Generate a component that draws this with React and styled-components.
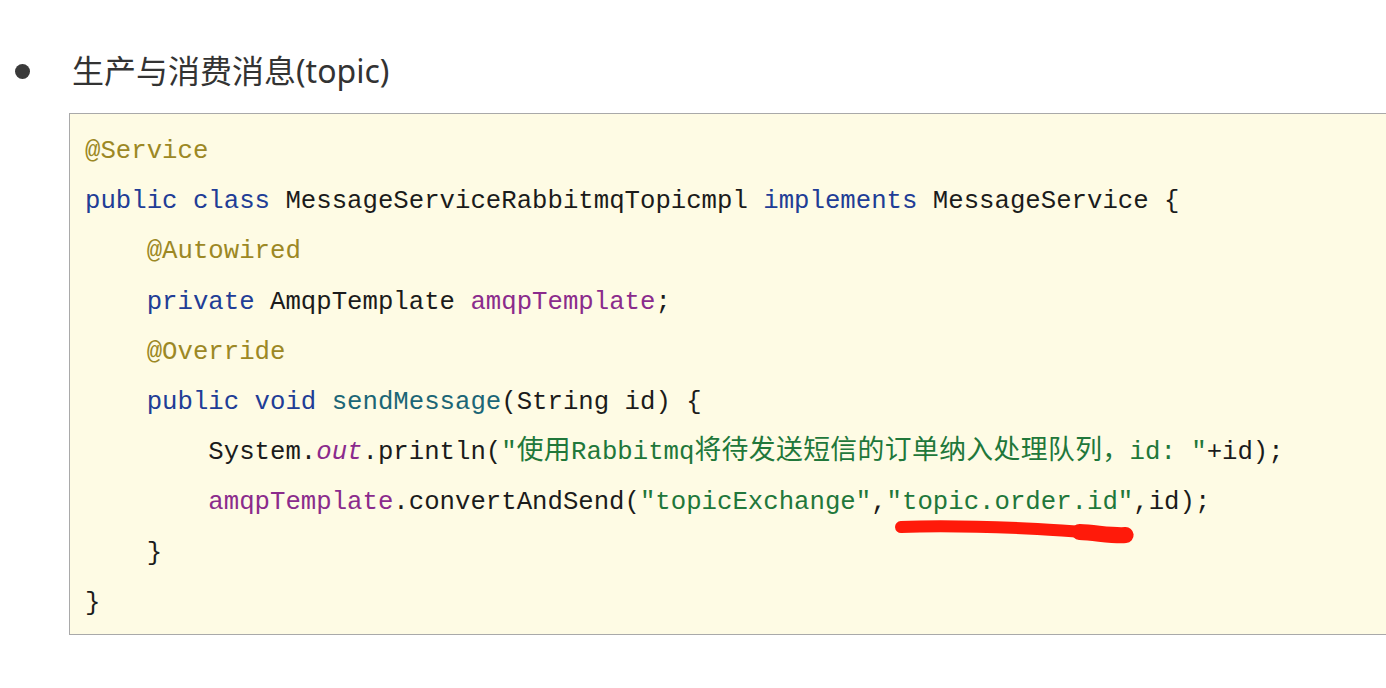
import React from 'react'
import styled, { createGlobalStyle } from 'styled-components'

const GlobalStyle = createGlobalStyle`
  html, body {
    margin: 0;
    padding: 0;
    background: #ffffff;
    overflow: hidden;
  }
`

const LINES = [
  { indent: 0, parts: [['ann', '@Service']] },
  {
    indent: 0,
    parts: [
      ['kw', 'public'], ['txt', ' '], ['kw', 'class'],
      ['txt', ' MessageServiceRabbitmqTopicmpl '], ['kw', 'implements'],
      ['txt', ' MessageService {'],
    ],
  },
  { indent: 4, parts: [['ann', '@Autowired']] },
  {
    indent: 4,
    parts: [['kw', 'private'], ['txt', ' AmqpTemplate '], ['field', 'amqpTemplate'], ['txt', ';']],
  },
  { indent: 4, parts: [['ann', '@Override']] },
  {
    indent: 4,
    parts: [
      ['kw', 'public'], ['txt', ' '], ['kw', 'void'], ['txt', ' '],
      ['method', 'sendMessage'], ['txt', '(String id) {'],
    ],
  },
  {
    indent: 8,
    parts: [
      ['txt', 'System.'], ['static', 'out'], ['txt', '.println('],
      ['str', ['"', ['使用'], 'Rabbitmq', ['将待发送短信的订单纳入处理队列，'], 'id: "']],
      ['txt', '+id);'],
    ],
  },
  {
    indent: 8,
    parts: [
      ['field', 'amqpTemplate'], ['txt', '.convertAndSend('],
      ['str', '"topicExchange"'], ['txt', ','], ['mark', '"topic.order.id"'], ['txt', ',id);'],
    ],
  },
  { indent: 4, parts: [['txt', '}']] },
  { indent: 0, parts: [['txt', '}']] },
]

// strings may hold CJK runs, written as nested arrays
function renderText(text) {
  if (!Array.isArray(text)) return text
  return text.map((piece, i) =>
    Array.isArray(piece) ? <Cjk key={i}>{piece[0]}</Cjk> : <React.Fragment key={i}>{piece}</React.Fragment>
  )
}

function Token({ kind, children }) {
  if (kind === 'mark') {
    return (
      <Marked>
        <Tok kind="str">{children}</Tok>
        <Scribble viewBox="0 0 246 30" preserveAspectRatio="none">
          <path
            d="M14 10 C 60 8, 110 10, 150 12 S 215 17, 238 18"
            fill="none"
            stroke="#ff1a0a"
            strokeWidth="12"
            strokeLinecap="round"
          />
          <path
            d="M192 15 C 210 16, 226 19, 238 18"
            fill="none"
            stroke="#ff1a0a"
            strokeWidth="16"
            strokeLinecap="round"
          />
        </Scribble>
      </Marked>
    )
  }
  return <Tok kind={kind}>{renderText(children)}</Tok>
}

function App() {
  return (
    <>
      <GlobalStyle />
      <Page>
        <Heading>
          <Bullet />
          <Title>生产与消费消息(topic)</Title>
        </Heading>
        <CodeBox>
          {LINES.map((line, i) => (
            <Line key={i}>
              {' '.repeat(line.indent)}
              {line.parts.map(([kind, text], j) => (
                <Token key={j} kind={kind}>{text}</Token>
              ))}
            </Line>
          ))}
        </CodeBox>
      </Page>
    </>
  )
}

export default App

const Page = styled.div`
  padding-top: 48px;
  width: 1386px;
  height: 688px;
  box-sizing: border-box;
`

const Heading = styled.div`
  display: flex;
  align-items: center;
  padding-left: 15px;
  height: 42px;
`

const Bullet = styled.span`
  width: 15px;
  height: 15px;
  border-radius: 50%;
  background: #3a3a3a;
  margin: 4px 42px 0 0;
`

const Title = styled.h2`
  margin: 0;
  font-family: "Noto Sans", "Noto Sans CJK SC", sans-serif;
  font-weight: 400;
  font-size: 32px;
  color: #333333;
`

const CodeBox = styled.pre`
  margin: 23px 0 0 69px;
  padding: 13px 0 5px 15px;
  background: #fefbe4;
  border: 1px solid #a9a9a9;
  border-right: 0;
  font-family: "Liberation Mono", "Noto Sans CJK SC", monospace;
  font-size: 25.7px;
  line-height: 50.2px;
  color: #1b1b1b;
  white-space: pre;
`

const Line = styled.div`
  height: 50.2px;
`

const colors = {
  ann: '#9c8824',
  kw: '#213d96',
  txt: '#1b1b1b',
  field: '#8b2b8c',
  static: '#8b2b8c',
  method: '#1b6676',
  str: '#21773a',
}

const Tok = styled.span`
  color: ${p => colors[p.kind] || '#1b1b1b'};
  font-style: ${p => (p.kind === 'static' ? 'italic' : 'normal')};
`

const Cjk = styled.span`
  font-family: "Noto Sans CJK SC", sans-serif;
  font-size: 26.8px;
  line-height: 1;
  letter-spacing: 0.4px;
`

const Marked = styled.span`
  position: relative;
`

const Scribble = styled.svg`
  position: absolute;
  left: 0;
  top: 100%;
  width: 100%;
  height: 30px;
  overflow: visible;
  pointer-events: none;
`
